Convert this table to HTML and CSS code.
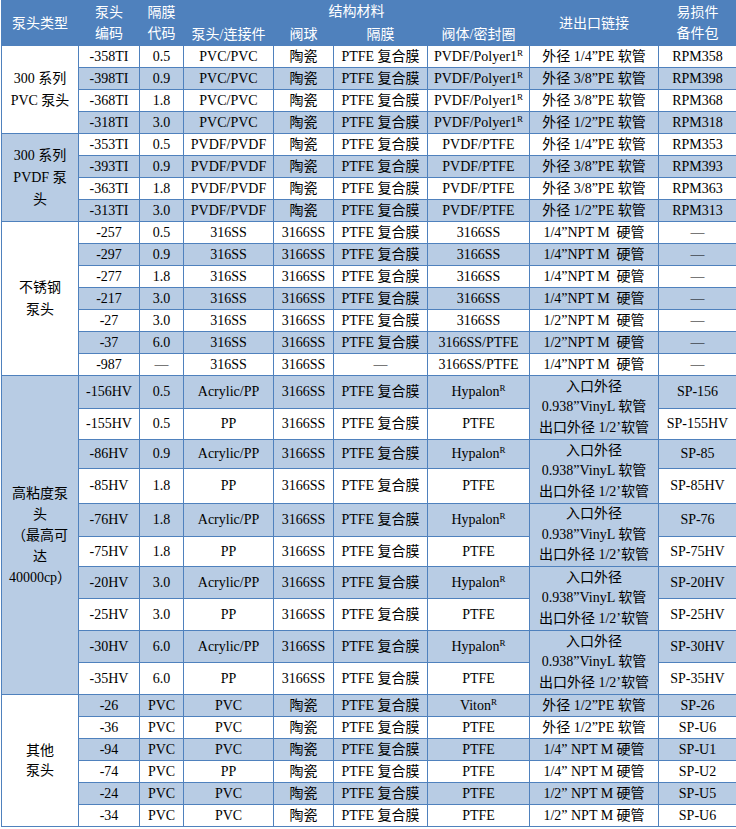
FILE: index.html
```
<!DOCTYPE html>
<html lang="zh">
<head>
<meta charset="utf-8">
<title>泵头类型</title>
<link rel="stylesheet" href="styles.css">
</head>
<body>
<table class="spec">
<colgroup>
<col class="c1"><col class="c2"><col class="c3"><col class="c4"><col class="c5"><col class="c6"><col class="c7"><col class="c8"><col class="c9">
</colgroup>
<thead>
<tr class="h1">
<th rowspan="2">泵头类型</th>
<th rowspan="2" class="two">泵头<br>编码</th>
<th rowspan="2" class="two">隔膜<br>代码</th>
<th colspan="4" class="top">结构材料</th>
<th rowspan="2">进出口链接</th>
<th rowspan="2" class="two">易损件<br>备件包</th>
</tr>
<tr class="h2">
<th class="sub">泵头/连接件</th>
<th class="sub">阀球</th>
<th class="sub">隔膜</th>
<th class="sub">阀体/密封圈</th>
</tr>
</thead>
<tbody>
<tr><td rowspan="4" class="grp">300 系列<br>PVC 泵头</td><td>-358TI</td><td>0.5</td><td>PVC/PVC</td><td>陶瓷</td><td>PTFE 复合膜</td><td>PVDF/Polyer1<sup>R</sup></td><td>外径 1/4”PE 软管</td><td>RPM358</td></tr>
<tr class="b"><td>-398TI</td><td>0.9</td><td>PVC/PVC</td><td>陶瓷</td><td>PTFE 复合膜</td><td>PVDF/Polyer1<sup>R</sup></td><td>外径 3/8”PE 软管</td><td>RPM398</td></tr>
<tr><td>-368TI</td><td>1.8</td><td>PVC/PVC</td><td>陶瓷</td><td>PTFE 复合膜</td><td>PVDF/Polyer1<sup>R</sup></td><td>外径 3/8”PE 软管</td><td>RPM368</td></tr>
<tr class="b"><td>-318TI</td><td>3.0</td><td>PVC/PVC</td><td>陶瓷</td><td>PTFE 复合膜</td><td>PVDF/Polyer1<sup>R</sup></td><td>外径 1/2”PE 软管</td><td>RPM318</td></tr>

<tr><td rowspan="4" class="grp blue">300 系列<br>PVDF 泵<br>头</td><td>-353TI</td><td>0.5</td><td>PVDF/PVDF</td><td>陶瓷</td><td>PTFE 复合膜</td><td>PVDF/PTFE</td><td>外径 1/4”PE 软管</td><td>RPM353</td></tr>
<tr class="b"><td>-393TI</td><td>0.9</td><td>PVDF/PVDF</td><td>陶瓷</td><td>PTFE 复合膜</td><td>PVDF/PTFE</td><td>外径 3/8”PE 软管</td><td>RPM393</td></tr>
<tr><td>-363TI</td><td>1.8</td><td>PVDF/PVDF</td><td>陶瓷</td><td>PTFE 复合膜</td><td>PVDF/PTFE</td><td>外径 3/8”PE 软管</td><td>RPM363</td></tr>
<tr class="b"><td>-313TI</td><td>3.0</td><td>PVDF/PVDF</td><td>陶瓷</td><td>PTFE 复合膜</td><td>PVDF/PTFE</td><td>外径 1/2”PE 软管</td><td>RPM313</td></tr>

<tr><td rowspan="7" class="grp">不锈钢<br>泵头</td><td>-257</td><td>0.5</td><td>316SS</td><td>3166SS</td><td>PTFE 复合膜</td><td>3166SS</td><td>1/4”NPT M&nbsp; 硬管</td><td>—</td></tr>
<tr class="b"><td>-297</td><td>0.9</td><td>316SS</td><td>3166SS</td><td>PTFE 复合膜</td><td>3166SS</td><td>1/4”NPT M&nbsp; 硬管</td><td>—</td></tr>
<tr><td>-277</td><td>1.8</td><td>316SS</td><td>3166SS</td><td>PTFE 复合膜</td><td>3166SS</td><td>1/4”NPT M&nbsp; 硬管</td><td>—</td></tr>
<tr class="b"><td>-217</td><td>3.0</td><td>316SS</td><td>3166SS</td><td>PTFE 复合膜</td><td>3166SS</td><td>1/4”NPT M&nbsp; 硬管</td><td>—</td></tr>
<tr><td>-27</td><td>3.0</td><td>316SS</td><td>3166SS</td><td>PTFE 复合膜</td><td>3166SS</td><td>1/2”NPT M&nbsp; 硬管</td><td>—</td></tr>
<tr class="b"><td>-37</td><td>6.0</td><td>316SS</td><td>3166SS</td><td>PTFE 复合膜</td><td>3166SS/PTFE</td><td>1/2”NPT M&nbsp; 硬管</td><td>—</td></tr>
<tr><td>-987</td><td>—</td><td>316SS</td><td>3166SS</td><td>—</td><td>3166SS/PTFE</td><td>1/4”NPT M&nbsp; 硬管</td><td>—</td></tr>

<tr class="b r33"><td rowspan="10" class="grp blue hv">高粘度泵<br>头<br>（最高可<br>达<br>40000cp）</td><td>-156HV</td><td>0.5</td><td>Acrylic/PP</td><td>3166SS</td><td>PTFE 复合膜</td><td>Hypalon<sup>R</sup></td><td rowspan="2" class="inlet">入口外径<br>0.938”VinyL 软管<br>出口外径 1/2’软管</td><td>SP-156</td></tr>
<tr class="r31"><td>-155HV</td><td>0.5</td><td>PP</td><td>3166SS</td><td>PTFE 复合膜</td><td>PTFE</td><td>SP-155HV</td></tr>
<tr class="b r29"><td>-86HV</td><td>0.9</td><td>Acrylic/PP</td><td>3166SS</td><td>PTFE 复合膜</td><td>Hypalon<sup>R</sup></td><td rowspan="2" class="inlet">入口外径<br>0.938”VinyL 软管<br>出口外径 1/2’软管</td><td>SP-85</td></tr>
<tr class="r35"><td>-85HV</td><td>1.8</td><td>PP</td><td>3166SS</td><td>PTFE 复合膜</td><td>PTFE</td><td>SP-85HV</td></tr>
<tr class="b r33"><td>-76HV</td><td>1.8</td><td>Acrylic/PP</td><td>3166SS</td><td>PTFE 复合膜</td><td>Hypalon<sup>R</sup></td><td rowspan="2" class="inlet">入口外径<br>0.938”VinyL 软管<br>出口外径 1/2’软管</td><td>SP-76</td></tr>
<tr class="r30"><td>-75HV</td><td>1.8</td><td>PP</td><td>3166SS</td><td>PTFE 复合膜</td><td>PTFE</td><td>SP-75HV</td></tr>
<tr class="b r32"><td>-20HV</td><td>3.0</td><td>Acrylic/PP</td><td>3166SS</td><td>PTFE 复合膜</td><td>Hypalon<sup>R</sup></td><td rowspan="2" class="inlet">入口外径<br>0.938”VinyL 软管<br>出口外径 1/2’软管</td><td>SP-20HV</td></tr>
<tr class="r32"><td>-25HV</td><td>3.0</td><td>PP</td><td>3166SS</td><td>PTFE 复合膜</td><td>PTFE</td><td>SP-25HV</td></tr>
<tr class="b r32"><td>-30HV</td><td>6.0</td><td>Acrylic/PP</td><td>3166SS</td><td>PTFE 复合膜</td><td>Hypalon<sup>R</sup></td><td rowspan="2" class="inlet">入口外径<br>0.938”VinyL 软管<br>出口外径 1/2’软管</td><td>SP-30HV</td></tr>
<tr class="r32"><td>-35HV</td><td>6.0</td><td>PP</td><td>3166SS</td><td>PTFE 复合膜</td><td>PTFE</td><td>SP-35HV</td></tr>

<tr class="b"><td rowspan="6" class="grp other">其他<br>泵头</td><td>-26</td><td>PVC</td><td>PVC</td><td>陶瓷</td><td>PTFE 复合膜</td><td>Viton<sup>R</sup></td><td>外径 1/2”PE 软管</td><td>SP-26</td></tr>
<tr><td>-36</td><td>PVC</td><td>PVC</td><td>陶瓷</td><td>PTFE 复合膜</td><td>PTFE</td><td>外径 1/2”PE 软管</td><td>SP-U6</td></tr>
<tr class="b"><td>-94</td><td>PVC</td><td>PVC</td><td>陶瓷</td><td>PTFE 复合膜</td><td>PTFE</td><td>1/4” NPT M 硬管</td><td>SP-U1</td></tr>
<tr><td>-74</td><td>PVC</td><td>PP</td><td>陶瓷</td><td>PTFE 复合膜</td><td>PTFE</td><td>1/4” NPT M 硬管</td><td>SP-U2</td></tr>
<tr class="b"><td>-24</td><td>PVC</td><td>PVC</td><td>陶瓷</td><td>PTFE 复合膜</td><td>PTFE</td><td>1/2” NPT M 硬管</td><td>SP-U5</td></tr>
<tr><td>-34</td><td>PVC</td><td>PVC</td><td>陶瓷</td><td>PTFE 复合膜</td><td>PTFE</td><td>1/2” NPT M 硬管</td><td>SP-U6</td></tr>
</tbody>
</table>
</body>
</html>
```
FILE: styles.css
```
html, body {
  margin: 0;
  padding: 0;
  background: #ffffff;
}
body {
  font-family: "Liberation Serif", "Noto Sans CJK SC", serif;
  font-size: 14px;
  color: #000000;
}
.spec {
  border-collapse: collapse;
  table-layout: fixed;
  width: 736px;
  margin-left: 1px;
}
.c1 { width: 77px; }
.c2 { width: 61px; }
.c3 { width: 44px; }
.c4 { width: 90px; }
.c5 { width: 60px; }
.c6 { width: 94px; }
.c7 { width: 102px; }
.c8 { width: 129px; }
.c9 { width: 78px; }

.spec th {
  background: #4f81bd;
  color: #ffffff;
  font-weight: normal;
  border: 1px solid #4f81bd;
  padding: 0;
  line-height: 21px;
  text-align: center;
  vertical-align: middle;
}
.spec .h1 { height: 22px; }
.spec .h2 { height: 23px; }

.spec td {
  border: 1px solid #4f81bd;
  padding: 0 1px;
  height: 21px;
  line-height: 20px;
  text-align: center;
  vertical-align: middle;
  white-space: nowrap;
  background: #ffffff;
}
.spec tr.b td { background: #b8cce4; }
.spec td.grp {
  background: #ffffff;
  line-height: 22px;
  white-space: normal;
}
.spec td.grp.blue, .spec tr.b td.grp.blue { background: #b8cce4; }
.spec tr.b td.grp.other { background: #ffffff; }
.spec td.hv { line-height: 21px; }
.spec td.other { line-height: 20px; }
.spec td.inlet {
  background: #b8cce4;
  line-height: 20.5px;
}
.spec tr.r33 td { height: 32px; }
.spec tr.r31 td { height: 30px; }
.spec tr.r29 td { height: 28px; }
.spec tr.r35 td { height: 34px; }
.spec tr.r30 td { height: 29px; }
.spec tr.r32 td { height: 31px; }
.spec td.grp.hv, .spec td.inlet { height: auto; }

sup {
  font-size: 9px;
  line-height: 0;
  vertical-align: 5px;
}
```
